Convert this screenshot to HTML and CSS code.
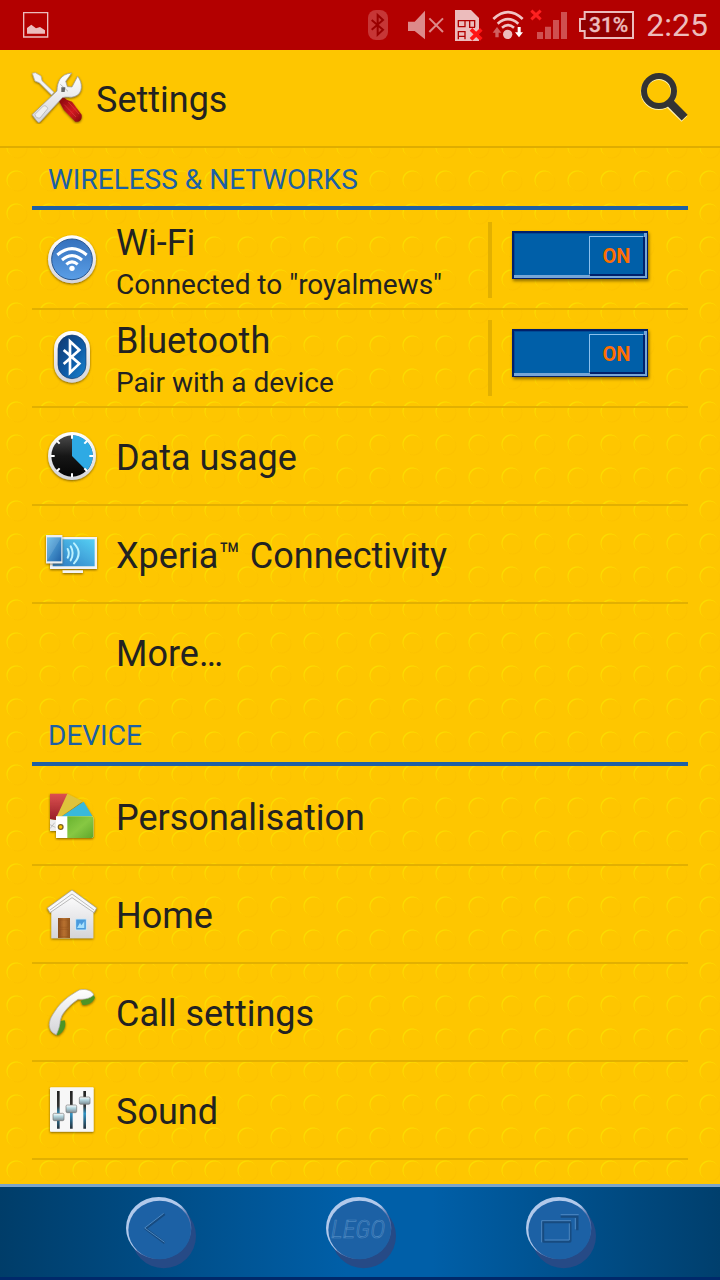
FILE: index.html
```html
<!DOCTYPE html>
<html lang="en">
<head>
<meta charset="utf-8">
<meta name="viewport" content="width=device-width, initial-scale=1">
<title>Settings</title>
<link rel="stylesheet" href="styles.css">
</head>
<body>
<svg class="defs" aria-hidden="true">
  <defs>
    <linearGradient id="silver" x1="0" y1="0" x2="0" y2="1"><stop offset="0" stop-color="#fff"/><stop offset="1" stop-color="#d4d4d8"/></linearGradient>
    <linearGradient id="wifiBlue" x1="0" y1="0" x2="0" y2="1"><stop offset="0" stop-color="#3571bd"/><stop offset="1" stop-color="#5a9ee6"/></linearGradient>
    <linearGradient id="btBlue" x1="0" y1="0" x2="1" y2="1"><stop offset="0" stop-color="#12396f"/><stop offset=".55" stop-color="#0d5aa5"/><stop offset="1" stop-color="#1c86d0"/></linearGradient>
    <linearGradient id="dial" x1="0" y1="0" x2="0" y2="1"><stop offset="0" stop-color="#4a4a4a"/><stop offset=".5" stop-color="#161616"/><stop offset="1" stop-color="#050505"/></linearGradient>
    <linearGradient id="screen" x1="0" y1="1" x2="1" y2="0"><stop offset="0" stop-color="#2d78c2"/><stop offset="1" stop-color="#56d0f4"/></linearGradient>
    <linearGradient id="phone" x1="0" y1="0" x2="1" y2="1"><stop offset="0" stop-color="#63b9e8"/><stop offset="1" stop-color="#2062a8"/></linearGradient>
    <linearGradient id="red" x1="0" y1="0" x2="0" y2="1"><stop offset="0" stop-color="#dd5150"/><stop offset="1" stop-color="#981f28"/></linearGradient>
    <linearGradient id="green" x1="0" y1="0" x2="1" y2="1"><stop offset="0" stop-color="#68b32f"/><stop offset=".5" stop-color="#87c843"/><stop offset="1" stop-color="#5ea72b"/></linearGradient>
    <linearGradient id="wood"><stop offset="0" stop-color="#8b4d1c"/><stop offset=".5" stop-color="#b8712f"/><stop offset="1" stop-color="#91551e"/></linearGradient>
    <linearGradient id="track" x1="0" y1="0" x2="0" y2="1"><stop offset="0" stop-color="#222"/><stop offset=".4" stop-color="#333"/><stop offset=".6" stop-color="#3193c4"/><stop offset="1" stop-color="#25303a"/></linearGradient>
    <linearGradient id="knob" x1="0" y1="0" x2="0" y2="1"><stop offset="0" stop-color="#fff"/><stop offset=".4" stop-color="#b4d6df"/><stop offset="1" stop-color="#7e8b92"/></linearGradient>
    <linearGradient id="handle" x1="0" y1="0" x2="1" y2="1"><stop offset="0" stop-color="#7a0509"/><stop offset=".6" stop-color="#d21a20"/><stop offset="1" stop-color="#82090b"/></linearGradient>
    <linearGradient id="shine" x1="0" y1="0" x2="1" y2="1"><stop offset="0" stop-color="#b1c9eb"/><stop offset=".48" stop-color="#b1c9eb"/><stop offset=".62" stop-color="#5a72ab"/><stop offset="1" stop-color="#4a6aa5"/></linearGradient>
    <filter id="soft" x="-20%" y="-20%" width="140%" height="140%"><feDropShadow dx="0" dy="3" stdDeviation="3" flood-color="#4c3500" flood-opacity=".7"/></filter>
  </defs>
</svg>

<header class="status">
  <svg class="notice" viewBox="66 33 84 84" role="img" aria-label="Screenshot saved"><path d="M71 38h72v73H71z" fill="none" stroke="#ecbcbc" stroke-width="4"/><path d="M81 101V84l13-10 14 11 12-4 15 10v10z" fill="#ecbcbc"/></svg>
  <div class="tray">
    <svg class="bt" viewBox="30 27 108 96" role="img" aria-label="Bluetooth"><rect x="51" y="30" width="60" height="90" rx="24" fill="#c63636"/><path d="M62 60l34 29-16 15V45l16 15-34 29" fill="none" stroke="#900" stroke-width="6"/></svg>
    <svg class="mute" viewBox="156 27 126 96" role="img" aria-label="Muted"><path d="M171 65h20l31-33v86l-31-25h-20z" fill="#dd8a8a"/><path d="M235 55l41 41m0-41l-41 41" stroke="#dd8a8a" stroke-width="6"/></svg>
    <svg class="sim" viewBox="300 27 96 96" role="img" aria-label="No SIM"><path d="M312 30h48l24 24v69h-72z" fill="#ecbcbc"/><path d="M320 62h51v20M322 60v20h20V62M356 62v20h16M320 95h24M322 95v23M342 95v23M322 109h20" fill="none" stroke="#b00000" stroke-width="4"/><path d="M360 88l31 30m0-30l-31 30" stroke="#ff1515" stroke-width="11"/></svg>
    <svg class="wifi" viewBox="414 27 102 96" role="img" aria-label="Wi-Fi"><g fill="none" stroke="#f0c4c4" stroke-width="8"><path d="M427 57q44-41 88 0"/><path d="M440 71q31-27 62 0"/><path d="M453 83q18-15 36 0"/></g><circle cx="470" cy="103" r="14" fill="#ecbcbc"/><path d="M438 81l13 17h-8v14h-10V98h-8z" fill="#d06060"/><path d="M504 112l12-15h-7V81h-9v16h-8z" fill="#fff"/></svg>
    <svg class="signal" viewBox="534 27 132 96" role="img" aria-label="No signal"><path d="M558 96h18v21h-18zM582 80h18v37h-18zM606 60h18v57h-18zM630 36h18v81h-18z" fill="#cf5050"/><path d="M541 32l28 26m0-26l-28 26" stroke="#ff2020" stroke-width="9"/></svg>
    <svg class="battery" viewBox="684 27 165 96" role="img" aria-label="Battery 31%"><path d="M701 36h145v78H701V93h-14V57h14z" fill="#900000" stroke="#ecbcbc" stroke-width="6"/><text x="773" y="96" text-anchor="middle" class="charge">31%</text></svg>
    <time class="clock">2:25</time>
  </div>
</header>

<div class="appbar">
  <svg class="logo" viewBox="90 213 162 162" aria-hidden="true"><g filter="url(#soft)"><path d="M97 223l9-2 17 10 3 14 36 35-7 8-37-37-13-5z" fill="#f3f3f3" stroke="#aaa" stroke-width="2"/><path d="M174 301l14-9 12 10 16 6 29 39c2 16-6 23-19 21l-35-36z" fill="url(#handle)"/><path d="M193 317l35 37M205 309l32 36" stroke="#e04040" stroke-width="2"/><path d="M96 347l75-71c1-27 9-50 44-54l-18 25 5 16 14 1 17-32c16 20 16 52-8 60-14 6-26-1-38 4l-67 73q-5 3-9-2z" fill="url(#silver)" stroke="#999" stroke-width="2"/><path d="M105 346l25-25q10-3 13 8l-23 28q-13 2-15-11z" fill="#eee" stroke="#aaa" stroke-width="2"/><path d="M181 256l23 21" stroke="#bbb" stroke-width="3"/><path d="M184 265h12l-2 14h-10z" fill="#666"/></g></svg>
  <h1 class="title">Settings</h1>
  <button class="search" type="button" aria-label="Search"><svg viewBox="48 30 168 168"><g fill="none" transform="translate(-1 4)" stroke="#fff2b0" stroke-width="18"><circle cx="117" cy="95" r="45"/><path d="M146 129l48 47" stroke-width="24"/></g><g fill="none" stroke="#333" stroke-width="18"><circle cx="117" cy="96" r="45"/><path d="M146 127l48 49" stroke-width="25"/></g></svg></button>
</div>

<main class="content">
  <section class="group">
    <h2 class="heading">WIRELESS &amp; NETWORKS</h2>
    <ul class="list">
      <li class="row">
        <a class="entry" href="#wifi">
          <svg class="icon" viewBox="36 30 180 180" aria-hidden="true"><circle cx="126" cy="118" r="72" fill="url(#silver)" filter="url(#soft)"/><circle cx="126" cy="118" r="61" fill="url(#wifiBlue)" stroke="#28558e" stroke-width="3"/><g fill="none" stroke="#fff" stroke-width="9"><path d="M82 105q44-38 88 0"/><path d="M96 120q30-26 60 0"/><path d="M109 133q17-15 34 0"/></g><circle cx="126" cy="145" r="8" fill="#fff"/></svg>
          <span class="text double"><span class="name">Wi-Fi</span><span class="note">Connected to "royalmews"</span></span>
        </a>
        <label class="toggle"><input class="check" type="checkbox" role="switch" aria-label="Wi-Fi" checked><span class="thumb">ON</span></label>
      </li>
      <li class="row">
        <a class="entry" href="#bluetooth">
          <svg class="icon" viewBox="36 324 180 180" aria-hidden="true"><rect x="72" y="333" width="108" height="155" rx="54" fill="url(#silver)" filter="url(#soft)"/><rect x="84" y="345" width="84" height="131" rx="42" fill="url(#btBlue)" stroke="#113b70" stroke-width="2"/><path d="M101 390l47 41-28 27v-94l28 26-47 42" fill="none" stroke="#fff" stroke-width="8"/></svg>
          <span class="text double"><span class="name">Bluetooth</span><span class="note">Pair with a device</span></span>
        </a>
        <label class="toggle"><input class="check" type="checkbox" role="switch" aria-label="Bluetooth" checked><span class="thumb">ON</span></label>
      </li>
      <li class="row">
        <a class="entry" href="#data">
          <svg class="icon" viewBox="36 18 180 180" aria-hidden="true"><circle cx="126" cy="108" r="72" fill="url(#silver)" filter="url(#soft)"/><circle cx="126" cy="108" r="62" fill="url(#dial)"/><path d="M126 108V46a62 62 0 0 1 44 106z" fill="#2eaae4"/><path d="M126 44v12M126 160v12M62 108h12M178 108h12M81 63l8 8M171 63l-8 8M81 153l8-8M171 153l-8-8" stroke="#fff" stroke-width="6"/></svg>
          <span class="text"><span class="name">Data usage</span></span>
        </a>
      </li>
      <li class="row">
        <a class="entry" href="#connectivity">
          <svg class="icon" viewBox="36 312 180 180" aria-hidden="true"><g filter="url(#soft)"><path d="M60 351h141v96H60z" fill="#f2f2f2"/><path d="M98 451h61v8H98z" fill="#f4f4f4"/><path d="M68 358h126v81H68z" fill="url(#screen)"/></g><g filter="url(#soft)"><path d="M48 345h49v85H48z" fill="#eee"/></g><path d="M51 352h43v72H51z" fill="url(#phone)"/><path d="M51 424V352h43z" fill="#fff" opacity=".12"/><g fill="none" stroke="#bdf2ff" stroke-width="6" stroke-linecap="round"><path d="M113 387q7 13 0 26"/><path d="M122 379q12 21 0 42"/><path d="M132 370q28 29 0 60"/></g></svg>
          <span class="text"><span class="name">Xperia™ Connectivity</span></span>
        </a>
      </li>
      <li class="row">
        <a class="entry" href="#more"><span class="icon"></span><span class="text"><span class="name">More…</span></span></a>
      </li>
    </ul>
  </section>

  <section class="group">
    <h2 class="heading">DEVICE</h2>
    <ul class="list">
      <li class="row">
        <a class="entry" href="#personalisation">
          <svg class="icon" viewBox="36 18 180 180" aria-hidden="true"><g filter="url(#soft)"><path d="M60 118l18 2v33H60z" fill="#eee"/><path d="M60 41h54L78 119l-18-2z" fill="url(#red)"/><path d="M112 41l46 23-66 47-14 4z" fill="#dfc33a"/><path d="M161 65l26 43-50 9-52-1z" fill="#37b9db"/><path d="M78 109h107q5 0 5 5v55q0 5-5 5H78z" fill="#fff"/><path d="M112 109h73q5 0 5 5v55q0 5-5 5h-73z" fill="url(#green)"/></g><path d="M60 134l16 8M60 146l14-18" stroke="#aaa" stroke-width="2"/><circle cx="92" cy="141" r="7" fill="#ffc800" stroke="#7d6420" stroke-width="4"/></svg>
          <span class="text"><span class="name">Personalisation</span></span>
        </a>
      </li>
      <li class="row">
        <a class="entry" href="#home">
          <svg class="icon" viewBox="36 312 180 180" aria-hidden="true"><g filter="url(#soft)"><path d="M64 380l61-43 65 43v95H64z" fill="url(#silver)"/><path d="M52 384l74-54 74 54-8 14-66-45-66 45z" fill="#f8f8f8" stroke="#999" stroke-width="2"/></g><path d="M60 390l66-48 66 48" fill="none" stroke="#bbb" stroke-width="3"/><path d="M84 414h36v60H84z" fill="url(#wood)"/><path d="M90 420h24v22H90zM90 448h24v22H90z" fill="none" stroke="#8b4d1c" stroke-width="1"/><path d="M137 417h32v33h-32z" fill="#6ebcf0" stroke="#cfe6f5" stroke-width="3"/><path d="M139 419h28v29h-28z" fill="#4a9add"/><path d="M141 444l9-16 4 8 9-12v20z" fill="#a7e0fc"/></svg>
          <span class="text"><span class="name">Home</span></span>
        </a>
      </li>
      <li class="row">
        <a class="entry" href="#call">
          <svg class="icon" viewBox="36 21 180 180" aria-hidden="true"><g filter="url(#soft)"><path d="M152 78l38-20 5 10c-7 16-22 22-37 22zM78 179l9-40 17-3c6 16-2 35-20 45z" fill="#4e9426"/><path d="M58 148c2-21 12-31 24-50 20-25 40-38 66-53 22-5 39 3 43 15-9 9-22 12-36 13l-11 0c-19 12-40 33-49 50l-4 12c-1 16-5 29-12 44-14-5-21-16-21-31z" fill="url(#silver)" stroke="#aaa" stroke-width="2"/></g></svg>
          <span class="text"><span class="name">Call settings</span></span>
        </a>
      </li>
      <li class="row">
        <a class="entry" href="#sound">
          <svg class="icon" viewBox="36 315 180 180" aria-hidden="true"><rect x="60" y="337" width="131" height="133" rx="3" fill="#f7f7f7" filter="url(#soft)"/><g fill="url(#track)"><path d="M81 348h8v113h-8zM120 348h8v113h-8zM160 348h8v113h-8z"/></g><g fill="url(#knob)" stroke="#777" stroke-width="2"><rect x="69" y="415" width="33" height="22" rx="4"/><rect x="108" y="390" width="32" height="23" rx="4"/><rect x="148" y="366" width="32" height="22" rx="4"/></g></svg>
          <span class="text"><span class="name">Sound</span></span>
        </a>
      </li>
      <li class="row"></li>
    </ul>
  </section>
</main>

<nav class="navbar" aria-label="System">
  <button class="stud" type="button" aria-label="Back"><svg viewBox="60 39 240 264"><circle cx="191" cy="183" r="97" fill="#264a86"/><ellipse cx="176" cy="159" rx="98" ry="93" fill="url(#shine)"/><ellipse cx="179" cy="165" rx="94" ry="88" fill="#1c61a5"/><path d="M194 117l-57 44 57 43" fill="none" stroke="#174b80" stroke-width="7"/><path d="M191 115l-57 44 60 43" fill="none" stroke="#4c87c0" stroke-width="3"/></svg></button>
  <button class="stud" type="button"><svg viewBox="660 39 240 264"><circle cx="791" cy="183" r="97" fill="#264a86"/><ellipse cx="776" cy="159" rx="98" ry="93" fill="url(#shine)"/><ellipse cx="779" cy="165" rx="94" ry="88" fill="#1c61a5"/><text x="774" y="190" text-anchor="middle" class="brand">LEGO</text></svg></button>
  <button class="stud" type="button" aria-label="Recent apps"><svg viewBox="360 39 240 264"><circle cx="491" cy="183" r="97" fill="#264a86"/><ellipse cx="476" cy="159" rx="98" ry="93" fill="url(#shine)"/><ellipse cx="479" cy="165" rx="94" ry="88" fill="#1c61a5"/><g fill="none" stroke="#174b80" stroke-width="7"><rect x="429" y="141" width="82" height="59" rx="2"/><path d="M482 125h50v41"/></g><g fill="none" stroke="#4c87c0" stroke-width="3"><path d="M425 202v-65h88M434 195h74v-50M482 119h54M526 129v34"/></g></svg></button>
</nav>
</body>
</html>
```
FILE: styles.css
```css
* {
  box-sizing: border-box;
}

body {
  margin: 0;
  height: 100vh;
  display: flex;
  flex-direction: column;
  overflow: hidden;
  background: #fec600;
  color: #222;
  font-family: Roboto, "Noto Sans", sans-serif;
}

h1,
h2,
ul {
  margin: 0;
  padding: 0;
  font-weight: 400;
  list-style: none;
}

button {
  padding: 0;
  border: 0;
  background: none;
  font: inherit;
  cursor: pointer;
}

svg {
  display: block;
}

.defs {
  position: absolute;
  width: 0;
  height: 0;
}

.status {
  flex: none;
  height: 50px;
  padding: 0 12px 0 22px;
  display: flex;
  align-items: center;
  justify-content: space-between;
  background: #b30000;
  color: #edbcbc;
}

.notice {
  width: 28px;
  height: 28px;
}

.tray {
  display: flex;
  align-items: center;
  gap: 6px;
}

.tray svg {
  height: 32px;
  overflow: visible;
}

.bt { width: 36px; }
.mute { width: 42px; }
.sim { width: 32px; }
.wifi { width: 34px; }
.signal { width: 44px; }
.battery { width: 55px; }

.charge {
  fill: #edbcbc;
  stroke: #edbcbc;
  stroke-width: 1px;
  font-size: 63px;
  font-weight: 500;
}

.clock {
  margin-left: 6px;
  font-size: 32px;
  line-height: 50px;
}

.appbar {
  flex: none;
  height: 98px;
  padding: 0 28px 2px 30px;
  display: flex;
  align-items: center;
  gap: 12px;
  background: #fec600;
  border-bottom: 2px solid #dfad00;
}

.logo {
  width: 54px;
  height: 54px;
}

.title {
  flex: 1;
  padding-top: 6px;
  font-size: 36px;
  line-height: 48px;
}

.search svg {
  width: 56px;
  height: 56px;
}

.content {
  flex: 1;
  min-height: 0;
  overflow: hidden;
  padding: 0 32px;
  background-image:
    radial-gradient(circle at 11px 11px, #fec600 9px, transparent 10px),
    radial-gradient(circle at 10px 10px, #fbdc00 9px, transparent 10px),
    radial-gradient(circle at 12px 12px, #fcc200 9px, transparent 10px);
  background-size: 33px 33px;
  background-position: 6px 22px;
}

.heading {
  height: 62px;
  padding: 10px 16px 0;
  border-bottom: 4px solid #1e60a4;
  color: #1b60a4;
  font-size: 28px;
  line-height: 44px;
}

.group + .group .heading {
  height: 64px;
  padding-top: 12px;
}

.list {
  padding-top: 2px;
}

.row {
  height: 98px;
  display: flex;
  align-items: center;
  border-bottom: 2px solid #e2b001;
}

.group:first-child .row:last-child {
  border-color: transparent;
}

.entry {
  flex: 1;
  height: 76px;
  padding-left: 10px;
  display: flex;
  align-items: center;
  gap: 14px;
  color: inherit;
  text-decoration: none;
}

.icon {
  flex: none;
  width: 60px;
  height: 60px;
}

.text {
  display: flex;
  flex-direction: column;
  padding-top: 4px;
}

.double {
  padding-top: 8px;
}

.name {
  font-size: 36px;
  line-height: 42px;
}

.note {
  font-size: 28px;
  line-height: 42px;
}

.toggle {
  height: 76px;
  padding: 9px 40px 19px 20px;
  border-left: 4px solid #e2b001;
  display: grid;
  cursor: pointer;
}

.check,
.thumb {
  grid-area: 1 / 1;
}

.check {
  appearance: none;
  width: 136px;
  height: 48px;
  margin: 0;
  background: #005fa8;
  border: solid #00206a;
  border-width: 2px 1px 1px 2px;
  box-shadow: inset -3px -3px 0 #76a6d6, inset 1px 1px 0 #004a94, 1px 2px 3px #8a6a00;
}

.thumb {
  align-self: center;
  justify-self: end;
  width: 55px;
  height: 39px;
  margin-right: 4px;
  border: 1px solid #8bc0ec;
  border-right-color: #00206a;
  border-bottom-color: #00206a;
  background: #005fa8;
  box-shadow: 1px 1px 0 #00206a;
  color: #ff6e00;
  font-size: 20px;
  font-weight: 700;
  line-height: 38px;
  text-align: center;
  z-index: 1;
}

.navbar {
  flex: none;
  height: 96px;
  display: flex;
  justify-content: center;
  gap: 120px;
  align-items: center;
  border-top: 3px solid #7ba4c8;
  border-bottom: 3px solid #00296a;
  background: linear-gradient(90deg, #003d69, #005fa8 48%, #005fa8 60%, #003f6d);
}

.stud svg {
  width: 80px;
  height: 88px;
}

.brand {
  font-family: "Roboto Condensed", "Liberation Sans Narrow", Roboto, sans-serif;
  font-size: 78px;
  font-style: italic;
  font-weight: 300;
  fill: #1c61a5;
  stroke: #4c87c0;
  stroke-width: 2px;
}
```
